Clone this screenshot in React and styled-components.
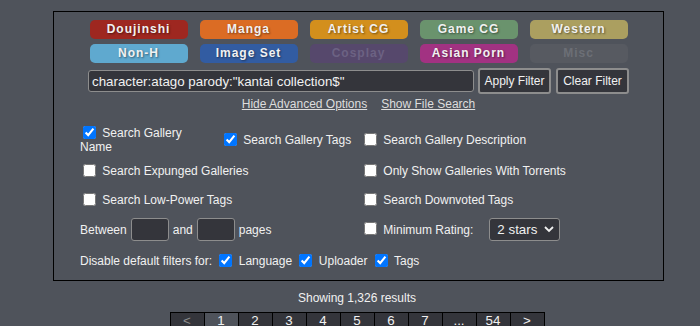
import React from 'react'
import styled, { createGlobalStyle } from 'styled-components'

const GlobalStyle = createGlobalStyle`
  html, body {
    margin: 0;
    padding: 0;
    background: #4f535b;
    color: #f1f1f1;
    font-family: "Liberation Sans", Arial, sans-serif;
    font-size: 12px;
    overflow: hidden;
  }
`

const Page = styled.div`
  width: 700px;
  height: 326px;
  overflow: hidden;
`

const TopLine = styled.div`
  margin-top: -14px;
  height: 15px;
  line-height: 15px;
  padding-left: 284px;
  white-space: nowrap;
`

const TopLink = styled.a`
  margin-left: 13px;
  margin-right: 7px;
  color: #dddddd;
  text-decoration: underline;
`

const Panel = styled.div`
  margin: 10px 0 0 53px;
  width: 609px;
  border: 1px solid #000;
  padding: 8px 0 2px;
  box-sizing: content-box;
`

const Categories = styled.div`
  display: grid;
  grid-template-columns: repeat(5, 98px);
  grid-auto-rows: 19px;
  column-gap: 12px;
  row-gap: 5px;
  justify-content: center;
`

const Cat = styled.div`
  height: 19px;
  line-height: 19px;
  border-radius: 5px;
  text-align: center;
  font-weight: bold;
  letter-spacing: 1px;
  background: ${({ $bg }) => $bg};
  color: ${({ $fg }) => $fg || '#f1f1f1'};
  text-shadow: ${({ $fg }) => ($fg ? 'none' : '1px 1px 2px rgba(0,0,0,0.45)')};
`

const SearchRow = styled.div`
  margin-top: 5px;
  height: 26px;
  display: flex;
  align-items: center;
  justify-content: center;
`

const SearchInput = styled.input`
  width: 386px;
  height: 22px;
  box-sizing: border-box;
  margin: 0 4px 0 0;
  padding: 0 3px;
  background: #34353b;
  border: 1px solid #8d8d8d;
  border-radius: 3px;
  color: #f1f1f1;
  font-family: "Liberation Sans", Arial, sans-serif;
  font-size: 13.33px;
  outline: none;
`

const FilterButton = styled.button`
  width: 73px;
  height: 26px;
  margin-left: ${({ $gap }) => $gap}px;
  padding: 0;
  background: #34353b;
  border: 2px solid #8d8d8d;
  border-radius: 3px;
  color: #f1f1f1;
  font-family: "Liberation Sans", Arial, sans-serif;
  font-size: 12px;
`

const LinkRow = styled.div`
  margin-top: 3px;
  height: 15px;
  line-height: 15px;
  display: flex;
  justify-content: center;
  gap: 14px;
`

const TextLink = styled.a`
  color: #dddddd;
  text-decoration: underline;
`

const Options = styled.div`
  margin: 11px 0 0 26px;
  display: grid;
  grid-template-columns: 141px 140px 1fr;
  grid-template-rows: 34px 29px 29px 29px 34px;
  align-items: center;
`

const Cell = styled.div`
  grid-column: ${({ $span }) => $span || 'auto'};
  line-height: ${({ $tight }) => ($tight ? '14px' : '15px')};
  max-width: ${({ $max }) => ($max ? `${$max}px` : 'none')};
  white-space: ${({ $max }) => ($max ? 'normal' : 'nowrap')};
`

const Check = styled.input.attrs({ type: 'checkbox' })`
  width: 13px;
  height: 13px;
  margin: 0 3px 0 ${({ $ml }) => ($ml === undefined ? 3 : $ml)}px;
  vertical-align: middle;
  position: relative;
  top: -1px;
`

const PagesRow = styled.div`
  grid-column: 1 / 3;
  display: flex;
  align-items: center;
  gap: 4px;
`

const SmallBox = styled.input`
  width: 38px;
  height: 23px;
  box-sizing: border-box;
  margin: 0;
  background: #34353b;
  border: 1px solid #8d8d8d;
  border-radius: 3px;
  color: #f1f1f1;
`

const RatingCell = styled.div`
  display: flex;
  align-items: center;
  white-space: nowrap;
`

const SelectWrap = styled.div`
  position: relative;
  margin-left: 16px;
  width: 71px;
  height: 23px;
`

const Select = styled.select`
  appearance: none;
  width: 71px;
  height: 23px;
  box-sizing: border-box;
  margin: 0;
  padding: 0 0 0 7px;
  background: #34353b;
  border: 1px solid #8d8d8d;
  border-radius: 3px;
  color: #f1f1f1;
  font-family: "Liberation Sans", Arial, sans-serif;
  font-size: 13.33px;
`

const Chevron = styled.svg`
  position: absolute;
  right: 6px;
  top: 8px;
  pointer-events: none;
`

const Results = styled.div`
  margin: 10px 0 0 53px;
  width: 608px;
  text-align: center;
  line-height: 15px;
`

const Pager = styled.table`
  margin: 6px auto 0;
  border-collapse: collapse;
`

const PageCell = styled.td`
  width: 33px;
  height: 26px;
  padding: 0;
  border: 1px solid #000;
  background: ${({ $current }) => ($current ? '#4f535b' : '#34353b')};
  color: ${({ $dim }) => ($dim ? '#8d8d8d' : '#f1f1f1')};
  font-size: 13.33px;
  line-height: 16px;
  text-align: center;
  vertical-align: top;
`

const categories = [
  { name: 'Doujinshi', bg: '#9e2720' },
  { name: 'Manga', bg: '#db6c24' },
  { name: 'Artist CG', bg: '#d38f1d' },
  { name: 'Game CG', bg: '#6a936d' },
  { name: 'Western', bg: '#ab9f60' },
  { name: 'Non-H', bg: '#5fa9cf' },
  { name: 'Image Set', bg: '#325ca2' },
  { name: 'Cosplay', bg: '#56486c', fg: '#6c6283' },
  { name: 'Asian Porn', bg: '#a23282' },
  { name: 'Misc', bg: '#575a61', fg: '#6c6f76' },
]

const pages = ['<', '1', '2', '3', '4', '5', '6', '7', '...', '54', '>']

export default function App() {
  return (
    <>
      <GlobalStyle />
      <Page>
        <TopLine>
          Filtering
          <TopLink>Tag Filter Settings</TopLink>[?]
        </TopLine>

        <Panel>
          <Categories>
            {categories.map((c) => (
              <Cat key={c.name} $bg={c.bg} $fg={c.fg}>
                {c.name}
              </Cat>
            ))}
          </Categories>

          <SearchRow>
            <SearchInput defaultValue={'character:atago parody:"kantai collection$"'} />
            <FilterButton $gap={0}>Apply Filter</FilterButton>
            <FilterButton $gap={5}>Clear Filter</FilterButton>
          </SearchRow>

          <LinkRow>
            <TextLink>Hide Advanced Options</TextLink>
            <TextLink>Show File Search</TextLink>
          </LinkRow>

          <Options>
            <Cell $tight $max={128}>
              <Check defaultChecked /> Search Gallery Name
            </Cell>
            <Cell>
              <Check defaultChecked /> Search Gallery Tags
            </Cell>
            <Cell>
              <Check /> Search Gallery Description
            </Cell>

            <Cell $span="1 / 3">
              <Check /> Search Expunged Galleries
            </Cell>
            <Cell>
              <Check /> Only Show Galleries With Torrents
            </Cell>

            <Cell $span="1 / 3">
              <Check /> Search Low-Power Tags
            </Cell>
            <Cell>
              <Check /> Search Downvoted Tags
            </Cell>

            <PagesRow>
              Between <SmallBox /> and <SmallBox /> pages
            </PagesRow>
            <RatingCell>
              <Check /> &nbsp;Minimum Rating:
              <SelectWrap>
                <Select defaultValue="2">
                  <option value="2">2 stars</option>
                  <option value="3">3 stars</option>
                  <option value="4">4 stars</option>
                  <option value="5">5 stars</option>
                </Select>
                <Chevron width="10" height="7" viewBox="0 0 10 7">
                  <polyline points="1,1 5,5 9,1" fill="none" stroke="#f1f1f1" strokeWidth="1.8" />
                </Chevron>
              </SelectWrap>
            </RatingCell>

            <Cell $span="1 / 4">
              Disable default filters for: <Check defaultChecked $ml={4} /> Language{' '}
              <Check defaultChecked $ml={4} /> Uploader <Check defaultChecked $ml={4} /> Tags
            </Cell>
          </Options>
        </Panel>

        <Results>
          Showing 1,326 results
          <Pager>
            <tbody>
              <tr>
                {pages.map((p, i) => (
                  <PageCell key={i} $current={p === '1'} $dim={p === '<'}>
                    {p}
                  </PageCell>
                ))}
              </tr>
            </tbody>
          </Pager>
        </Results>
      </Page>
    </>
  )
}
